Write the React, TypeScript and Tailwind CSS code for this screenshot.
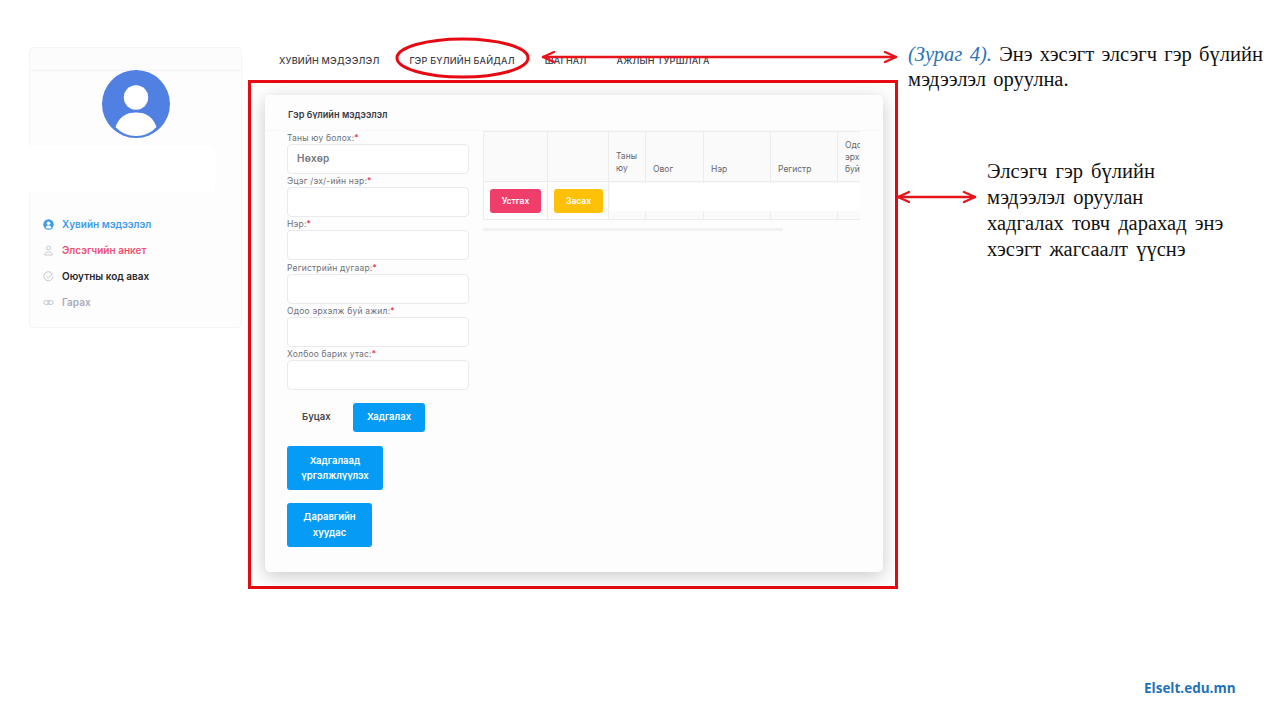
import React from "react";

const fields = [
  { label: "Таны юу болох:", value: "Нөхөр" },
  { label: "Эцэг /эх/-ийн нэр:", value: "" },
  { label: "Нэр:", value: "" },
  { label: "Регистрийн дугаар:", value: "" },
  { label: "Одоо эрхэлж буй ажил:", value: "" },
  { label: "Холбоо барих утас:", value: "" },
];

function MenuItem({ icon, text, cls }: { icon: React.ReactNode; text: string; cls: string }) {
  return (
    <div className="flex items-center h-[26px]">
      <div className="w-[11px] h-[11px] mr-[8px] flex items-center justify-center">{icon}</div>
      <span className={`text-[10px] font-semibold ${cls}`}>{text}</span>
    </div>
  );
}

function Arrow({ x1, x2, y }: { x1: number; x2: number; y: number }) {
  return (
    <g fill="none" stroke="#e8141c" strokeWidth="2.4" strokeLinecap="round" strokeLinejoin="round">
      <line x1={x1} y1={y} x2={x2} y2={y} />
      <polyline points={`${x1 + 11},${y - 5} ${x1},${y} ${x1 + 11},${y + 5}`} />
      <polyline points={`${x2 - 11},${y - 5} ${x2},${y} ${x2 - 11},${y + 5}`} />
    </g>
  );
}

export default function App() {
  return (
    <div className="relative w-[1280px] h-[720px] overflow-hidden bg-white font-['Inter',sans-serif] flex items-start pl-[29px] pt-[47px]">
      {/* sidebar */}
      <aside className="relative w-[213px] h-[281px] shrink-0 rounded-[5px] border border-[#f5f5f7] bg-[#fdfdfe]">
        <div className="h-[23px] border-b border-[#f3f3f5] bg-[#fcfcfc] rounded-t-[5px]" />
        <div className="flex justify-center mt-[-1px] pl-[1px]">
          <svg width="68" height="68" viewBox="0 0 68 68">
            <circle cx="34" cy="34" r="34" fill="#4f80e2" />
            <circle cx="34" cy="27.5" r="12.2" fill="#fff" />
            <path d="M13.5 57 C17 47 24 42.5 34 42.5 C44 42.5 51 47 54.5 57 C49 63 42 66 34 66 C26 66 19 63 13.5 57 Z" fill="#fff" />
          </svg>
        </div>
        <div className="absolute left-[-10px] top-[98px] w-[195px] h-[47px] rounded-[5px] bg-white" />
        <div className="mt-[73px] ml-[13px] flex flex-col">
          <MenuItem
            cls="text-[#3d9bea]"
            text="Хувийн мэдээлэл"
            icon={
              <svg width="11" height="11" viewBox="0 0 11 11">
                <circle cx="5.5" cy="5.5" r="5.2" fill="#3d9bea" />
                <circle cx="5.5" cy="4.3" r="1.8" fill="#fff" />
                <path d="M2.5 8.4C3.2 7 4.2 6.6 5.5 6.6S7.8 7 8.5 8.4C7.7 9.2 6.7 9.6 5.5 9.6S3.3 9.2 2.5 8.4Z" fill="#fff" />
              </svg>
            }
          />
          <MenuItem
            cls="text-[#ef4f72]"
            text="Элсэгчийн анкет"
            icon={
              <svg width="11" height="11" viewBox="0 0 11 11" fill="none" stroke="#b9bcc6" strokeWidth="0.8">
                <circle cx="5.5" cy="3" r="2" />
                <path d="M1.8 10C1.8 7.8 3.4 7 5.5 7S9.2 7.8 9.2 10Z" />
              </svg>
            }
          />
          <MenuItem
            cls="text-[#26272e]"
            text="Оюутны код авах"
            icon={
              <svg width="11" height="11" viewBox="0 0 11 11" fill="none" stroke="#b9bcc6" strokeWidth="0.8">
                <path d="M9.6 3.4A4.6 4.6 0 1 0 10 5.5" />
                <path d="M3.4 5.2L5.2 7L10 2.4" />
              </svg>
            }
          />
          <MenuItem
            cls="text-[#a9abbd]"
            text="Гарах"
            icon={
              <svg width="11" height="11" viewBox="0 0 11 11" fill="none" stroke="#b9bcc6" strokeWidth="0.9">
                <rect x="0.8" y="3.6" width="5.4" height="3.8" rx="1.9" />
                <rect x="4.8" y="3.6" width="5.4" height="3.8" rx="1.9" />
              </svg>
            }
          />
        </div>
      </aside>

      {/* main column */}
      <main className="ml-[6px] w-[650px] shrink-0 flex flex-col">
        <nav className="h-[33px] pl-[31px] pt-[7px] flex gap-[30px] text-[9.1px] font-medium tracking-[0.2px] text-[#3c3d47] leading-[14px]">
          <span>ХУВИЙН МЭДЭЭЛЭЛ</span>
          <span>ГЭР БҮЛИЙН БАЙДАЛ</span>
          <span>ШАГНАЛ</span>
          <span>АЖЛЫН ТУРШЛАГА</span>
        </nav>
        <section className="h-[509px] border-[3px] border-[#e60a12] pl-[14px] pt-[12px]">
          <div className="w-[618px] h-[477px] rounded-[5px] bg-[#fdfdfd] shadow-[0_4px_18px_rgba(0,0,0,0.22)]">
            <div className="h-[36px] pl-[23px] pt-[14px] text-[9.2px] leading-[12px] font-semibold text-[#3a3b47] border-b border-[#f8f8f8]">
              Гэр бүлийн мэдээлэл
            </div>
            <div className="flex pl-[22px]">
              {/* form */}
              <div className="w-[182px] shrink-0 flex flex-col pt-[1px]">
                <div className="flex flex-col gap-[1px]">
                  {fields.map((f) => (
                    <div key={f.label} className="flex flex-col h-[42.2px]">
                      <label className="text-[8.5px] leading-[12px] tracking-[0.2px] text-[#6f7078] h-[12px]">
                        {f.label}
                        <span className="text-[#e8304a]">*</span>
                      </label>
                      <div className="h-[30px] rounded-[4px] border border-[#e9eaf0] bg-white pl-[9px] pb-[2px] flex items-center text-[10px] font-semibold tracking-[0.3px] text-[#74757d]">
                        {f.value}
                      </div>
                    </div>
                  ))}
                </div>
                <div className="mt-[13px] flex items-center">
                  <span className="ml-[15px] w-[51px] pb-[1px] text-[9.5px] font-semibold text-[#45464f]">Буцах</span>
                  <div className="w-[72px] h-[29px] pb-[1px] rounded-[3px] bg-[#069bf5] flex items-center justify-center text-[9.5px] font-semibold text-white">
                    Хадгалах
                  </div>
                </div>
                <div className="mt-[14px] w-[96px] h-[44px] rounded-[3px] bg-[#069bf5] flex items-center justify-center text-center text-[9.5px] leading-[15px] font-semibold text-white">
                  Хадгалаад<br />үргэлжлүүлэх
                </div>
                <div className="mt-[13px] w-[85px] h-[44px] rounded-[3px] bg-[#069bf5] flex items-center justify-center text-center text-[9.5px] leading-[16px] font-semibold text-white">
                  Даравгийн<br />хуудас
                </div>
              </div>
              {/* table */}
              <div className="ml-[14px] w-[377px] shrink-0">
                <div className="relative w-[377px] h-[89px] overflow-hidden border-y border-[#ececec] bg-[#fafafa]">
                  <div className="flex h-[50px] border-b border-[#ececec] text-[8.5px] leading-[12px] text-[#66676e]">
                    <div className="w-[65px] shrink-0 border-x border-[#ececec]" />
                    <div className="w-[61px] shrink-0 border-r border-[#ececec]" />
                    <div className="w-[37px] shrink-0 border-r border-[#ececec] pl-[7px] pb-[7px] flex items-end">Таны юу</div>
                    <div className="w-[58px] shrink-0 border-r border-[#ececec] pl-[7px] pb-[6px] flex items-end">Овог</div>
                    <div className="w-[67px] shrink-0 border-r border-[#ececec] pl-[7px] pb-[6px] flex items-end">Нэр</div>
                    <div className="w-[67px] shrink-0 border-r border-[#ececec] pl-[7px] pb-[6px] flex items-end">Регистр</div>
                    <div className="w-[40px] shrink-0 pl-[7px] pb-[6px] flex items-end">Одоо эрхэлж буй</div>
                  </div>
                  <div className="flex h-[38px]">
                    <div className="w-[65px] shrink-0 border-x border-[#ececec] pl-[6px] pt-[7px] bg-[#fdfdfd]">
                      <div className="w-[51px] h-[24px] rounded-[3px] bg-[#f03e6b] flex items-center justify-center text-[8.5px] font-semibold text-white">Устгах</div>
                    </div>
                    <div className="w-[61px] shrink-0 border-r border-[#ececec] pl-[6px] pt-[7px] bg-[#fdfdfd]">
                      <div className="w-[49px] h-[24px] rounded-[3px] bg-[#ffc107] flex items-center justify-center text-[8.5px] font-semibold text-white">Засах</div>
                    </div>
                    <div className="w-[37px] shrink-0 border-r border-[#ececec]" />
                    <div className="w-[58px] shrink-0 border-r border-[#ececec]" />
                    <div className="w-[67px] shrink-0 border-r border-[#ececec]" />
                    <div className="w-[67px] shrink-0 border-r border-[#ececec]" />
                  </div>
                  <div className="absolute left-[127px] top-[51px] right-0 h-[28px] bg-white rounded-bl-[3px]" />
                </div>
                <div className="mt-[8px] w-[300px] h-[3px] rounded-full bg-[#f1f1f1]" />
              </div>
            </div>
          </div>
        </section>
      </main>

      {/* notes */}
      <div className="ml-[10px] w-[370px] shrink-0 flex flex-col font-['Liberation_Serif',serif] text-[20.5px] text-[#111] whitespace-nowrap">
        <p className="mt-[-5px] leading-[25px] [word-spacing:2.2px]">
          <em className="text-[#2e75b6]">(Зураг 4).</em> Энэ хэсэгт элсэгч гэр бүлийн
          <br />
          мэдээлэл оруулна.
        </p>
        <p className="ml-[79px] mt-[66px] leading-[26px] [word-spacing:3px]">
          Элсэгч гэр бүлийн
          <br />
          мэдээлэл оруулан
          <br />
          хадгалах товч дарахад энэ
          <br />
          хэсэгт жагсаалт үүснэ
        </p>
      </div>

      <div className="absolute left-[1144px] top-[680px] font-['Open_Sans',sans-serif] text-[13.5px] leading-[17px] font-bold text-[#1f72b8]">
        Elselt.edu.mn
      </div>

      {/* annotation marks */}
      <svg className="absolute left-0 top-0 pointer-events-none" width="1280" height="720">
        <ellipse cx="462.5" cy="58" rx="65.5" ry="19" fill="none" stroke="#e60a12" strokeWidth="3" />
        <Arrow x1={543} x2={896} y={57} />
        <Arrow x1={898} x2={975} y={197} />
      </svg>
    </div>
  );
}
